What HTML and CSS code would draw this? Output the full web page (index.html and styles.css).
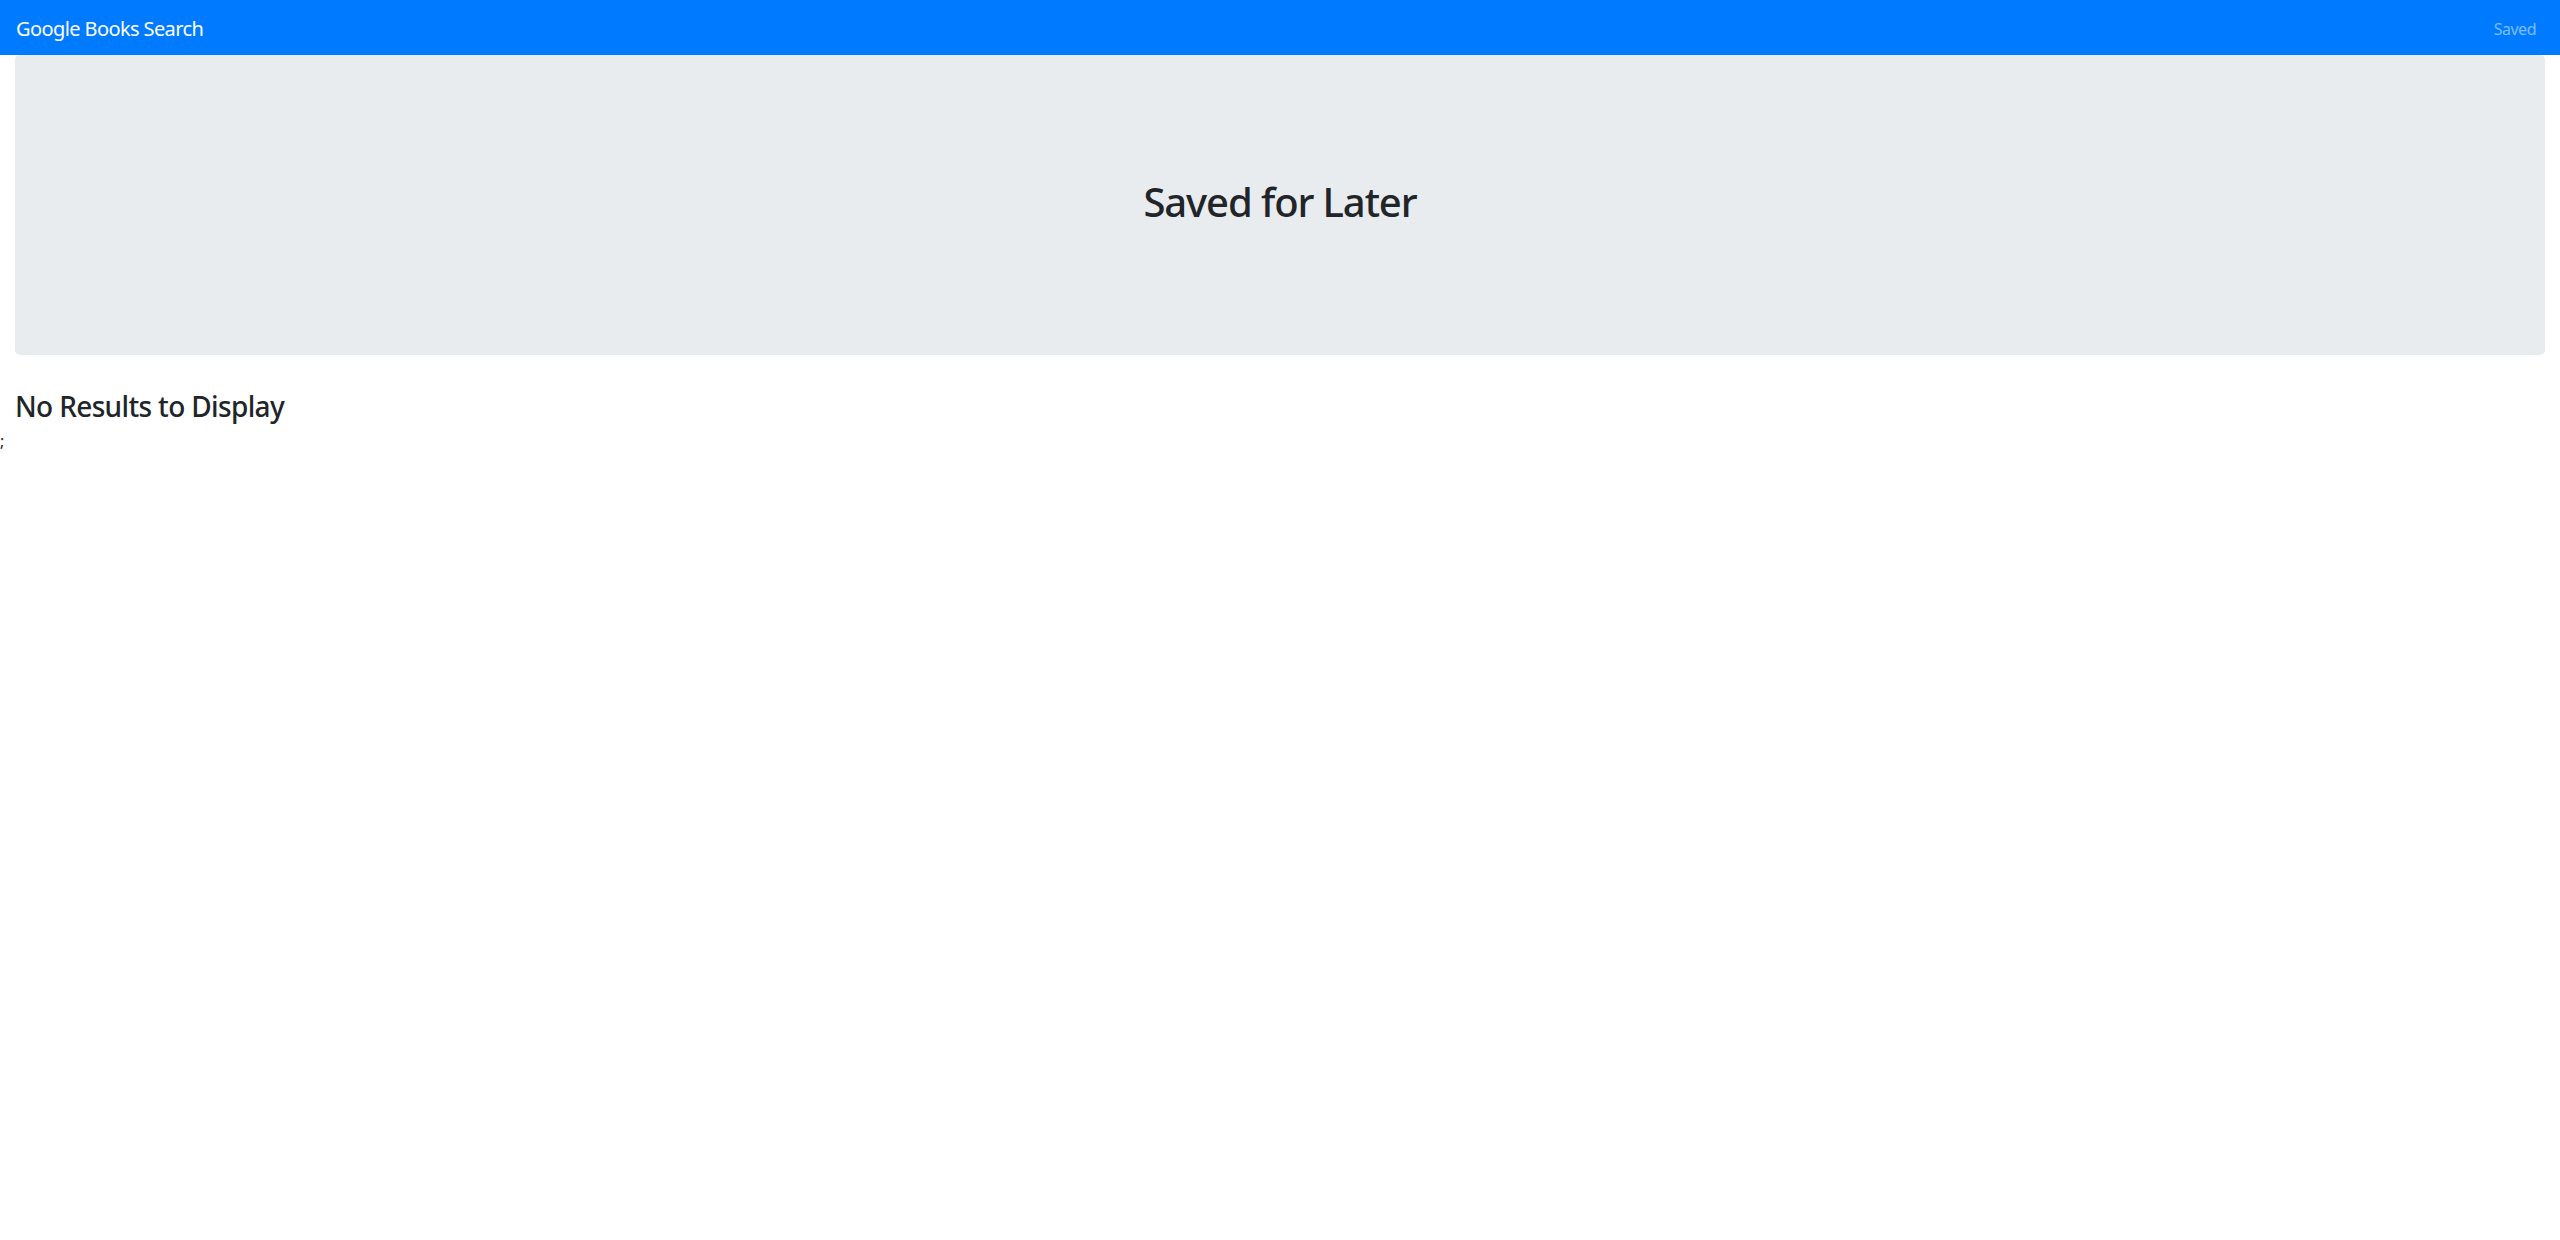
FILE: index.html
```html
<!DOCTYPE html>
<html lang="en">
<head>
<meta charset="utf-8">
<title>Google Books Search</title>
<link rel="stylesheet" href="styles.css">
</head>
<body>
<nav class="navbar">
  <a class="brand" href="#">Google Books Search</a>
  <ul class="nav">
    <li><a class="nav-link" href="#">Saved</a></li>
  </ul>
</nav>
<div class="container">
  <div class="jumbotron">
    <h1 class="title">Saved for Later</h1>
  </div>
  <h3 class="empty">No Results to Display</h3>
</div>
<span class="stray">;</span>
</body>
</html>
```

FILE: styles.css
```css
* { box-sizing: border-box; }
html, body {
  margin: 0;
  padding: 0;
  background: #fff;
  color: #212529;
  font-family: "Noto Sans", "Open Sans", sans-serif;
  font-size: 16px;
  line-height: 1.5;
  letter-spacing: -0.5px;
}
.navbar {
  display: flex;
  align-items: center;
  justify-content: space-between;
  height: 55px;
  padding: 2px 16px 0;
  background: #007bff;
}
.brand {
  color: #fff;
  font-size: 20px;
  line-height: 30px;
  text-decoration: none;
  letter-spacing: -0.6px;
}
.nav {
  list-style: none;
  margin: 0;
  padding: 0;
  display: flex;
}
.nav-link {
  display: block;
  padding: 8px 8px;
  color: rgba(255, 255, 255, 0.5);
  text-decoration: none;
  font-size: 16px;
}
.container {
  padding: 0 15px;
}
.jumbotron {
  height: 300px;
  padding: 123px 32px 0;
  margin-bottom: 32px;
  background: #e9ecef;
  border-radius: 4.8px;
  text-align: center;
}
.title {
  margin: 0;
  font-size: 40px;
  font-weight: 500;
  line-height: 1.2;
  letter-spacing: -1.1px;
}
.empty {
  margin: 0 0 5px;
  padding-top: 3px;
  font-size: 28px;
  font-weight: 500;
  line-height: 1.2;
  letter-spacing: -0.65px;
}
.stray {
  display: block;
}
```
